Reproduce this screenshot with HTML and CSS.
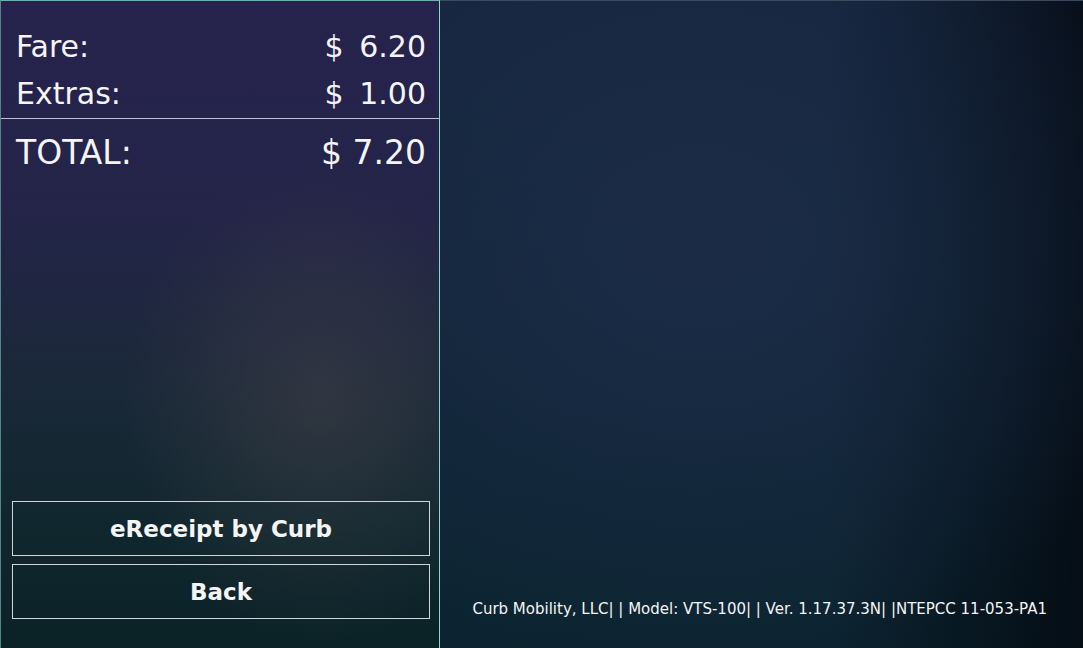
FILE: index.html
```html
<!DOCTYPE html>
<html>
<head>
<meta charset="utf-8">
<link rel="stylesheet" href="styles.css">
</head>
<body>
<div class="screen">
  <section class="left">
    <div class="lines">
      <div class="row"><span>Fare:</span><span>$ 6.20</span></div>
      <div class="row"><span>Extras:</span><span>$ 1.00</span></div>
    </div>
    <div class="total row"><span>TOTAL:</span><span>$ 7.20</span></div>
    <div class="buttons">
      <div class="btn">eReceipt by Curb</div>
      <div class="btn">Back</div>
    </div>
  </section>
  <section class="right">
    <div class="footer">Curb Mobility, LLC| | Model: VTS-100| | Ver. 1.17.37.3N| |NTEPCC 11-053-PA1</div>
  </section>
</div>
</body>
</html>
```
FILE: styles.css
```css
html, body {
  margin: 0;
  padding: 0;
  background: #07141c;
}
.screen {
  width: 1083px;
  height: 648px;
  display: flex;
  font-family: "DejaVu Sans", sans-serif;
  color: #f4f4f4;
  overflow: hidden;
}
.left {
  width: 438px;
  height: 647px;
  border-top: 1px solid #6fb0aa;
  border-left: 1px solid #4f8a88;
  border-right: 1px solid #8fd2cf;
  display: flex;
  flex-direction: column;
  background:
    radial-gradient(ellipse 200px 240px at 320px 400px, rgba(70,68,74,0.5), rgba(70,68,74,0) 100%),
    linear-gradient(180deg, #26224d 0%, #242449 30%, #1a2838 60%, #0e262c 85%, #0b2227 100%);
}
.lines {
  padding: 22px 13px 0 15px;
  border-bottom: 1px solid #b9c6cc;
  height: 95px;
  word-spacing: 6px;
}
.row {
  display: flex;
  justify-content: space-between;
  font-size: 30px;
  line-height: 47px;
}
.total {
  padding: 9px 13px 0 15px;
  font-size: 33px;
  line-height: 50px;
}
.buttons {
  margin-top: auto;
  padding: 0 9px 29px 11px;
  display: flex;
  flex-direction: column;
  gap: 8px;
}
.btn {
  height: 53px;
  border: 1px solid #d3d6d8;
  display: flex;
  align-items: center;
  justify-content: center;
  font-weight: bold;
  font-size: 23px;
}
.right {
  flex: 1;
  height: 647px;
  border-top: 1px solid #3c4a5c;
  display: flex;
  align-items: flex-end;
  justify-content: flex-end;
  background:
    radial-gradient(ellipse 500px 420px at 260px 250px, rgba(28,44,72,0.9), rgba(28,44,72,0) 100%),
    linear-gradient(90deg, rgba(0,0,0,0) 60%, rgba(2,6,12,0.75) 100%),
    linear-gradient(180deg, #162640 0%, #112638 50%, #0b2430 100%);
}
.footer {
  font-size: 15px;
  padding: 0 36px 30px 0;
  white-space: nowrap;
}
```
